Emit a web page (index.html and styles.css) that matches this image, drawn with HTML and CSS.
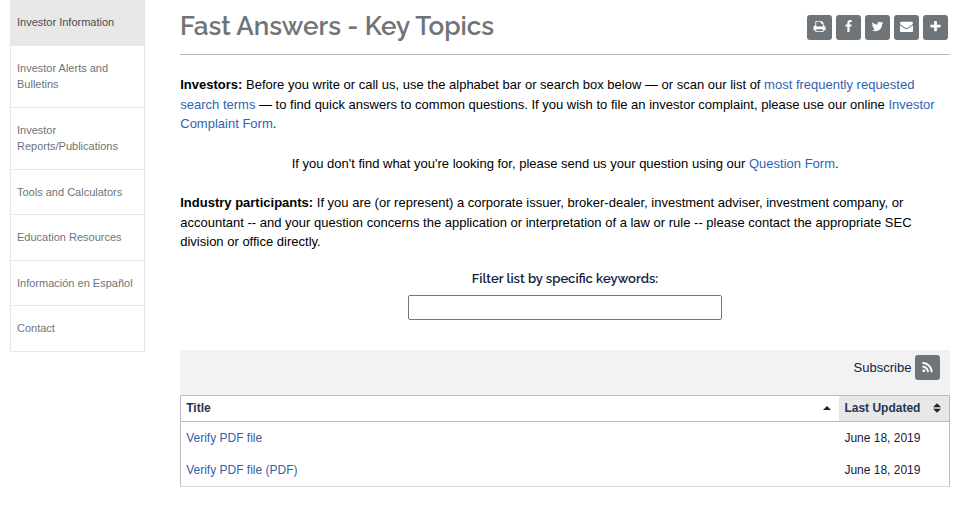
FILE: index.html
```html
<!DOCTYPE html>
<html lang="en">
<head>
<meta charset="utf-8">
<title>Fast Answers - Key Topics</title>
<link rel="stylesheet" href="styles.css">
</head>
<body>
<div class="page">
  <nav class="sidebar">
    <a class="active">Investor Information</a>
    <a>Investor Alerts and Bulletins</a>
    <a>Investor Reports/Publications</a>
    <a>Tools and Calculators</a>
    <a>Education Resources</a>
    <a>Información en Español</a>
    <a>Contact</a>
  </nav>
  <main>
    <header>
      <h1>Fast Answers - Key Topics</h1>
      <div class="share">
        <span class="btn"><svg viewBox="0 0 1792 1792"><path d="M448 1536h896v-256h-896v256zm0-640h896v-384h-160q-40 0-68-28t-28-68v-160h-640v640zm1152 64q0-26-19-45t-45-19-45 19-19 45 19 45 45 19 45-19 19-45zm128 0v416q0 13-9.500 22.500t-22.500 9.500h-224v160q0 40-28 68t-68 28h-960q-40 0-68-28t-28-68v-160h-224q-13 0-22.500-9.500t-9.500-22.500v-416q0-79 56.500-135.500t135.500-56.500h64v-544q0-40 28-68t68-28h672q40 0 88 20t76 48l152 152q28 28 48 76t20 88v256h64q79 0 135.500 56.500t56.500 135.500z"/></svg></span>
        <span class="btn"><svg viewBox="0 0 1792 1792"><path d="M1343 12v264h-157q-86 0-116 36t-30 108v189h293l-39 296h-254v759h-306v-759h-255v-296h255v-218q0-186 104-288.500t277-102.500q147 0 228 12z"/></svg></span>
        <span class="btn"><svg viewBox="0 0 1792 1792"><path d="M1684 408q-67 98-162 167 1 14 1 42 0 130-38 259.500t-115.500 248.500-184.500 210.500-258 146-323 54.500q-271 0-496-145 35 4 78 4 225 0 401-138-105-2-188-64.500t-114-159.500q33 5 61 5 43 0 85-11-112-23-185.500-111.500t-73.500-205.500v-4q68 38 146 41-66-44-105-115t-39-154q0-88 44-163 121 149 294.500 238.500t371.500 99.500q-8-38-8-74 0-134 94.500-228.500t228.500-94.500q140 0 236 102 109-21 205-78-37 115-142 178 93-10 186-50z"/></svg></span>
        <span class="btn"><svg viewBox="0 0 1792 1792"><path d="M1792 710v794q0 66-47 113t-113 47h-1472q-66 0-113-47t-47-113v-794q44 49 101 87 362 246 497 345 57 42 92.500 65.500t94.500 48 110 24.500h2q51 0 110-24.500t94.500-48 92.500-65.500q170-123 498-345 57-39 100-87zm0-294q0 79-49 151t-122 123q-376 261-468 325-10 7-42.500 31t-54 38.500-52 32.500-57.500 27-50 9h-2q-23 0-50-9t-57.500-27-52-32.500-54-38.500-42.500-31q-91-64-262-182.500t-205-142.500q-62-42-117-115.500t-55-136.500q0-78 41.500-130t118.500-52h1472q65 0 112.500 47t47.500 113z"/></svg></span>
        <span class="btn"><svg viewBox="0 0 1792 1792"><path d="M1600 736v192q0 40-28 68t-68 28h-416v416q0 40-28 68t-68 28h-192q-40 0-68-28t-28-68v-416h-416q-40 0-68-28t-28-68v-192q0-40 28-68t68-28h416v-416q0-40 28-68t68-28h192q40 0 68 28t28 68v416h416q40 0 68 28t28 68z"/></svg></span>
      </div>
    </header>
    <p><strong>Investors:</strong> Before you write or call us, use the alphabet bar or search box below — or scan our list of <a>most frequently requested search terms</a> — to find quick answers to common questions. If you wish to file an investor complaint, please use our online <a>Investor Complaint Form</a>.</p>
    <p class="center">If you don't find what you're looking for, please send us your question using our <a>Question Form</a>.</p>
    <p><strong>Industry participants:</strong> If you are (or represent) a corporate issuer, broker-dealer, investment adviser, investment company, or accountant -- and your question concerns the application or interpretation of a law or rule -- please contact the appropriate SEC division or office directly.</p>
    <form class="filter">
      <label for="keywords">Filter list by specific keywords:</label>
      <input id="keywords" type="text">
    </form>
    <div class="subscribe">
      <span>Subscribe</span>
      <span class="btn"><svg viewBox="0 0 1792 1792"><path d="M576 1344q0 80-56 136t-136 56-136-56-56-136 56-136 136-56 136 56 56 136zm512 123q2 28-17 48-18 21-47 21h-135q-25 0-43-16.500t-20-41.500q-22-229-184.500-391.500t-391.500-184.500q-25-2-41.500-20t-16.500-43v-135q0-29 21-47 17-17 43-17h5q160 13 306 80.500t259 181.500q114 113 181.500 259t80.500 306zm512 2q2 27-18 47-18 20-46 20h-143q-26 0-44.500-17.500t-19.500-42.500q-12-215-101-408.500t-231.500-336-336-231.500-408.500-102q-25-1-42.500-19.500t-17.500-43.500v-143q0-28 20-46 18-18 44-18h3q262 13 501.500 120t425.500 294q187 186 294 425.500t120 501.500z"/></svg></span>
    </div>
    <table>
      <thead>
        <tr>
          <th><div class="head">Title<svg class="sort" viewBox="0 0 8 10"><path d="M0 7 4 3l4 4z"/></svg></div></th>
          <th class="date"><div class="head">Last Updated<svg class="sort" viewBox="0 0 8 10"><path d="M0 4.300 4 .3l4 4zM0 5.700h8l-4 4z"/></svg></div></th>
        </tr>
      </thead>
      <tbody>
        <tr><td><a>Verify PDF file</a></td><td>June 18, 2019</td></tr>
        <tr><td><a>Verify PDF file (PDF)</a></td><td>June 18, 2019</td></tr>
      </tbody>
    </table>
  </main>
</div>
</body>
</html>
```
FILE: styles.css
```css
* { box-sizing: border-box; }
body {
  margin: 0;
  background: #fff;
  color: #000;
  font: 13px/19.5px "Liberation Sans", Arial, sans-serif;
}
.page { display: flex; align-items: flex-start; gap: 35px; padding: 0 10px; }
.sidebar {
  width: 135px;
  flex: none;
  border: 1px solid #e8e8e8;
  border-top: 0;
  font-size: 11px;
  line-height: 16.5px;
}
.sidebar a {
  display: block;
  padding: 14px 6px;
  color: #6f7478;
  border-top: 1px solid #e8e8e8;
}
.sidebar .active { background: #e8e8e8; color: #494d50; border-top: 0; }
main { flex: 1; min-width: 0; }
header {
  display: flex;
  justify-content: space-between;
  height: 55px;
  padding: 15px 2px 0 0;
  border-bottom: 1px solid #bbb;
}
h1 {
  margin: -5px 0 0;
  color: #6f7478;
  font: 600 26px/32px Raleway, Lato, sans-serif;
  white-space: nowrap;
}
.share { display: flex; gap: 4px; }
.btn {
  display: flex;
  justify-content: center;
  width: 25px;
  height: 25px;
  padding-top: 5px;
  border-radius: 3px;
  background: #6f7478;
}
.btn svg { width: 13px; height: 13px; fill: #fff; }
p { margin: 20px 0; padding-left: .25px; }
main a { color: #2e63b3; }
.center { text-align: center; }
.filter { display: flex; flex-direction: column; align-items: center; margin-top: -1px; }
.filter label {
  color: #14213d;
  font: 600 13px/16px Raleway, Lato, sans-serif;
}
.filter input {
  width: 314px;
  height: 25px;
  margin: 8px 0 30px;
  border: 1px solid #767676;
  border-radius: 2px;
}
.subscribe {
  display: flex;
  justify-content: flex-end;
  gap: 3.6px;
  height: 45px;
  padding: 5px 10px 0 0;
  background: #f2f2f2;
  color: #14213d;
  line-height: 25px;
}
.subscribe svg { margin-top: 1px; }
table {
  width: 100%;
  border: 1px solid #bbb;
  border-bottom-color: #d6d7d9;
  border-spacing: 0;
  table-layout: fixed;
  color: #14213d;
  font-size: 12px;
  line-height: 18px;
}
th { height: 26px; padding: 0 8px 0 5.2px; border-bottom: 1px solid #bbb; text-align: left; color: #253655; }
.date { width: 110px; padding-left: 5.4px; background: #e8e8e8; }
.head { display: flex; align-items: center; justify-content: space-between; }
.sort { width: 8px; height: 10px; fill: #222; }
td { height: 32px; padding: 0 5.2px; }
td + td { padding-left: 5.4px; }
```
